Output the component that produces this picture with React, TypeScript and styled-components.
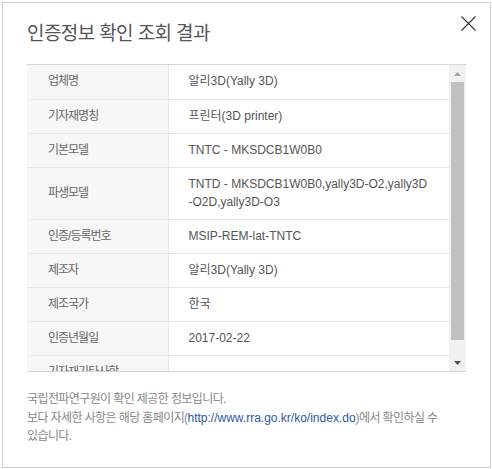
import * as React from "react"
import styled, { createGlobalStyle } from "styled-components"

const GlobalStyle = createGlobalStyle`
  html, body {
    margin: 0;
    padding: 0;
    background: #fff;
  }
  body {
    font-family: "Liberation Sans", "Noto Sans CJK KR", sans-serif;
  }
`

const Dialog = styled.div`
  box-sizing: border-box;
  width: 489px;
  height: 466px;
  margin: 2px 0 0 2px;
  border: 1px solid #cfcfcf;
  background: #fff;
  padding: 13px 24px 0 24px;
`

const Header = styled.div`
  display: flex;
  align-items: flex-start;
  justify-content: space-between;
`

const Title = styled.h2`
  margin: 4px 0 0 0;
  font-size: 19px;
  line-height: 28px;
  font-weight: normal;
  letter-spacing: -0.6px;
  color: #555;
`

const CloseButton = styled.button`
  width: 15px;
  height: 15px;
  padding: 0;
  margin-right: -10px;
  border: 0;
  background: none;
  cursor: pointer;
  display: flex;
`

const ScrollArea = styled.div`
  margin-top: 16px;
  display: flex;
  height: 306px;
  border-top: 1px solid #d5d5d5;
  border-bottom: 1px solid #d5d5d5;
`

const Viewport = styled.div`
  flex: 1;
  overflow-y: auto;
  scrollbar-width: none;
  &::-webkit-scrollbar {
    display: none;
  }
`

const Scrollbar = styled.div`
  width: 17px;
  flex: none;
  display: flex;
  flex-direction: column;
  background: #f1f1f1;
`

const ArrowButton = styled.div`
  height: 17px;
  flex: none;
  display: flex;
  align-items: center;
  justify-content: center;
`

const Track = styled.div`
  flex: 1;
  padding: 0 2px;
`

const Thumb = styled.div<{ $size: number }>`
  height: ${(p) => p.$size}px;
  background: #c1c1c1;
`

const InfoTable = styled.table`
  width: 100%;
  border-collapse: collapse;
  font-size: 12px;
  line-height: 18px;
`

const Row = styled.tr`
  height: 34px;
  border-bottom: 1px solid #e6e6e6;
`

const Label = styled.th`
  box-sizing: border-box;
  width: 141px;
  padding: 7px 0 8px 21px;
  background: #f7f7f7;
  border-right: 1px solid #e6e6e6;
  text-align: left;
  font-weight: normal;
  color: #666;
  letter-spacing: -1px;
  vertical-align: middle;
  white-space: nowrap;
`

const Value = styled.td`
  padding: 7px 8px 8px 20px;
  color: #555;
  vertical-align: middle;
  white-space: pre-line;
`

const Notice = styled.p`
  margin: 18px 0 0 0;
  font-size: 12px;
  line-height: 18.5px;
  color: #888;
  letter-spacing: -0.6px;
  word-break: keep-all;
`

const SiteLink = styled.a`
  color: #2a5aa8;
  text-decoration: none;
  letter-spacing: 0;
`

const rows: [string, string][] = [
  ["업체명", "알리3D(Yally 3D)"],
  ["기자재명칭", "프린터(3D printer)"],
  ["기본모델", "TNTC - MKSDCB1W0B0"],
  ["파생모델", "TNTD - MKSDCB1W0B0,yally3D-O2,yally3D\n-O2D,yally3D-O3"],
  ["인증/등록번호", "MSIP-REM-lat-TNTC"],
  ["제조자", "알리3D(Yally 3D)"],
  ["제조국가", "한국"],
  ["인증년월일", "2017-02-22"],
  ["기자재기타사항", ""],
]

const App = () => {
  return (
    <>
      <GlobalStyle />
      <Dialog>
        <Header>
          <Title>인증정보 확인 조회 결과</Title>
          <CloseButton aria-label="닫기">
            <svg width="15" height="15" viewBox="0 0 15 15">
              <path d="M0.5 0.5 L14.5 14.5 M14.5 0.5 L0.5 14.5" stroke="#333" strokeWidth="1.1" />
            </svg>
          </CloseButton>
        </Header>
        <ScrollArea>
          <Viewport>
            <InfoTable>
              <tbody>
                {rows.map(([k, v]) => (
                  <Row key={k}>
                    <Label>{k}</Label>
                    <Value>{v}</Value>
                  </Row>
                ))}
              </tbody>
            </InfoTable>
          </Viewport>
          <Scrollbar>
            <ArrowButton>
              <svg width="7" height="4" viewBox="0 0 7 4">
                <path d="M0 4 L3.5 0 L7 4 Z" fill="#a3a3a3" />
              </svg>
            </ArrowButton>
            <Track>
              <Thumb $size={258} />
            </Track>
            <ArrowButton>
              <svg width="7" height="4" viewBox="0 0 7 4">
                <path d="M0 0 L7 0 L3.5 4 Z" fill="#505050" />
              </svg>
            </ArrowButton>
          </Scrollbar>
        </ScrollArea>
        <Notice>
          국립전파연구원이 확인 제공한 정보입니다.
          <br />
          보다 자세한 사항은 해당 홈페이지(
          <SiteLink href="#">http://www.rra.go.kr/ko/index.do</SiteLink>)에서 확인하실 수 있습니다.
        </Notice>
      </Dialog>
    </>
  )
}

export default App
